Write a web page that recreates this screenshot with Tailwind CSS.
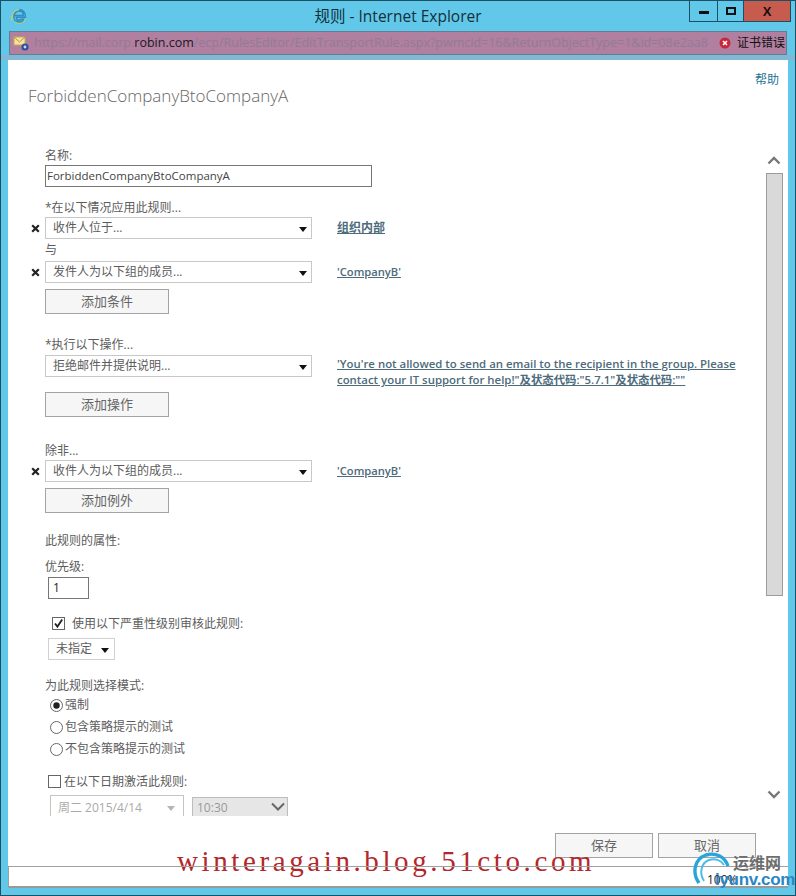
<!DOCTYPE html>
<html lang="zh">
<head>
    <meta charset="UTF-8">
    <title>规则 - Internet Explorer</title>
    <script src="https://cdn.jsdelivr.net/npm/@tailwindcss/browser@4"></script>
</head>
<body class="m-0 bg-[#62c8e9]">
<div class="relative w-[796px] h-[896px] overflow-hidden flex flex-col bg-[#62c8e9] border border-[#1d4f63] font-['Open_Sans','Noto_Sans_CJK_SC',sans-serif] text-[12px] text-[#5c5c5c]">

    <!-- title bar -->
    <div class="h-[30px] shrink-0 flex relative">
        <svg class="absolute left-[9px] top-[6px]" width="18" height="18" viewBox="0 0 18 18">
            <path d="M2 13.5C1 9 3.5 4 9 2.5" fill="none" stroke="#d8c95a" stroke-width="1.4"/>
            <path d="M5 15.5C9 17 13 15.5 15.5 12" fill="none" stroke="#c9c65a" stroke-width="1.3"/>
            <path d="M4.5 8.5H13.5C13.5 5.5 11.5 4 9.2 4C6.2 4 3.8 6.5 3.8 9.6C3.8 12.7 6.2 15 9.2 15C11.4 15 12.9 14 13.6 12.3H11C10.5 13 9.9 13.3 9.1 13.3C7.4 13.3 6.4 12 6.3 10.3H15.5C15.8 6.5 13.8 2.8 9.3 2.5" fill="none" stroke="#2f8fc4" stroke-width="1.5"/>
        </svg>
        <div class="flex-1 text-center text-[15.5px] leading-[30px] text-[#12303c]">规则 - Internet Explorer</div>
        <div class="absolute right-[4px] top-0 flex h-[21px] border border-t-0 border-[#1d4f63]">
            <div class="w-[28px] flex items-center justify-center border-r border-[#1d4f63]"><div class="w-[10px] h-[3px] mt-[3px] bg-[#111]"></div></div>
            <div class="w-[26px] flex items-center justify-center border-r border-[#1d4f63]"><div class="w-[10px] h-[8px] border-2 border-[#111]"></div></div>
            <div class="w-[46px] bg-[#c75b4d] flex items-center justify-center text-[13px] font-bold text-[#111] leading-none font-['Liberation_Sans',sans-serif]">X</div>
        </div>
    </div>

    <!-- address bar -->
    <div class="mx-[8px] w-[778px] h-[24px] shrink-0 flex items-center bg-[#b17f9f] border border-[#5f7f95]">
        <svg class="ml-[3px] shrink-0" width="17" height="17" viewBox="0 0 17 17">
            <rect x="1" y="2" width="11" height="8" fill="#f3e2a0" stroke="#c9a94e"/>
            <path d="M1 2L6.5 7L12 2" fill="none" stroke="#b8923c"/>
            <circle cx="12" cy="12" r="3.6" fill="#2c4f9e"/>
            <circle cx="12" cy="12" r="1.4" fill="#cdd8f0"/>
        </svg>
        <div class="ml-[4px] w-[675px] overflow-hidden whitespace-nowrap text-[12.5px] text-[#907c98] leading-[22px]">https://mail.corp.<span class="text-[#1a1a22]">robin.com</span>/ecp/RulesEditor/EditTransportRule.aspx?pwmcid=16&amp;ReturnObjectType=1&amp;id=08e2aa8</div>
        <svg class="ml-[10px] shrink-0" width="12" height="12" viewBox="0 0 12 12">
            <circle cx="6" cy="6" r="5.5" fill="#c9283a"/>
            <path d="M4 4L8 8M8 4L4 8" stroke="#fff" stroke-width="1.6"/>
        </svg>
        <div class="ml-[6px] text-[12px] text-[#111] whitespace-nowrap">证书错误</div>
    </div>
    <div class="h-[5px] shrink-0 bg-[#82b8d4]"></div>

    <!-- dialog body -->
    <div class="mx-[7px] w-[780px] h-[828px] shrink-0 bg-white border-b-2 border-[#9a9a9a] flex flex-col">
        <div class="h-[72px] shrink-0 relative">
            <div class="absolute right-[9px] top-[11px] text-[#1b7596]">帮助</div>
            <div class="pl-[20px] pt-[23px] text-[17px] leading-[26px] font-light text-[#666]">ForbiddenCompanyBtoCompanyA</div>
        </div>

        <div class="h-[684px] shrink-0 flex">
            <!-- scrolling form -->
            <div class="w-[750px] overflow-hidden pl-[37px] pt-[14px]">
                <div class="h-[19px] leading-[19px]">名称:</div>
                <div class="w-[327px] h-[22px] border border-[#767676] pl-[1px] leading-[20px] text-[11.5px] text-[#444]">ForbiddenCompanyBtoCompanyA</div>

                <div class="mt-[11px] h-[19px] leading-[19px]">*在以下情况应用此规则...</div>
                <div class="relative w-[267px] h-[22px] border border-[#c8c8c8] flex items-center pl-[7px] justify-between pr-[4px]">
                    <svg class="absolute left-[-15px] top-[6px]" width="9" height="9" viewBox="0 0 9 9"><path d="M1.2 1.2L7.8 7.8M7.8 1.2L1.2 7.8" stroke="#222" stroke-width="2.2"/></svg>
                    <span>收件人位于...</span>
                    <svg width="8" height="5" viewBox="0 0 8 5" class="mt-[2px]"><path d="M0 0H8L4 5Z" fill="#111"/></svg>
                    <a class="absolute left-[291px] top-[0px] whitespace-nowrap underline font-semibold text-[12px] text-[#4d6b7b] leading-[19px]">组织内部</a>
                </div>
                <div class="h-[22px] leading-[22px]">与</div>
                <div class="relative w-[267px] h-[22px] border border-[#c8c8c8] flex items-center pl-[7px] justify-between pr-[4px]">
                    <svg class="absolute left-[-15px] top-[6px]" width="9" height="9" viewBox="0 0 9 9"><path d="M1.2 1.2L7.8 7.8M7.8 1.2L1.2 7.8" stroke="#222" stroke-width="2.2"/></svg>
                    <span>发件人为以下组的成员...</span>
                    <svg width="8" height="5" viewBox="0 0 8 5" class="mt-[2px]"><path d="M0 0H8L4 5Z" fill="#111"/></svg>
                    <a class="absolute left-[291px] top-[0px] whitespace-nowrap underline font-semibold text-[11.2px] text-[#4d6b7b] leading-[19px]">'CompanyB'</a>
                </div>
                <div class="mt-[6px] w-[124px] h-[25px] border border-[#a3a3a3] bg-[#f6f6f6] text-center leading-[23px] text-[13px] text-[#666]">添加条件</div>

                <div class="mt-[21px] h-[20px] leading-[19px]">*执行以下操作...</div>
                <div class="relative w-[267px] h-[22px] border border-[#c8c8c8] flex items-center pl-[7px] justify-between pr-[4px]">
                    <span>拒绝邮件并提供说明...</span>
                    <svg width="8" height="5" viewBox="0 0 8 5" class="mt-[2px]"><path d="M0 0H8L4 5Z" fill="#111"/></svg>
                    <a class="absolute left-[291px] top-[0px] w-[406px] underline font-semibold text-[11.4px] text-[#4d6b7b] leading-[16px]">'You're not allowed to send an email to the recipient in the group. Please contact your IT support for help!"及状态代码:"5.7.1"及状态代码:""</a>
                </div>
                <div class="mt-[15px] w-[124px] h-[25px] border border-[#a3a3a3] bg-[#f6f6f6] text-center leading-[23px] text-[13px] text-[#666]">添加操作</div>

                <div class="mt-[24px] h-[19px] leading-[19px]">除非...</div>
                <div class="relative w-[267px] h-[22px] border border-[#c8c8c8] flex items-center pl-[7px] justify-between pr-[4px]">
                    <svg class="absolute left-[-15px] top-[6px]" width="9" height="9" viewBox="0 0 9 9"><path d="M1.2 1.2L7.8 7.8M7.8 1.2L1.2 7.8" stroke="#222" stroke-width="2.2"/></svg>
                    <span>收件人为以下组的成员...</span>
                    <svg width="8" height="5" viewBox="0 0 8 5" class="mt-[2px]"><path d="M0 0H8L4 5Z" fill="#111"/></svg>
                    <a class="absolute left-[291px] top-[0px] whitespace-nowrap underline font-semibold text-[11.2px] text-[#4d6b7b] leading-[19px]">'CompanyB'</a>
                </div>
                <div class="mt-[6px] w-[124px] h-[25px] border border-[#a3a3a3] bg-[#f6f6f6] text-center leading-[23px] text-[13px] text-[#666]">添加例外</div>

                <div class="mt-[18px] h-[19px] leading-[19px]">此规则的属性:</div>
                <div class="mt-[7px] h-[19px] leading-[19px]">优先级:</div>
                <div class="mt-[1px] ml-[3px] w-[41px] h-[22px] border border-[#767676] pl-[4px] leading-[20px] text-[#222]">1</div>

                <div class="mt-[18px] ml-[7px] h-[13px] flex items-center">
                    <svg width="13" height="13" viewBox="0 0 13 13" class="shrink-0"><rect x="0.5" y="0.5" width="12" height="12" fill="#fff" stroke="#666"/><path d="M3 6.5L5.4 9.6L10.2 2.6" fill="none" stroke="#222" stroke-width="1.8"/></svg>
                    <span class="ml-[7px] whitespace-nowrap">使用以下严重性级别审核此规则:</span>
                </div>
                <div class="mt-[8px] ml-[3px] w-[67px] h-[22px] border border-[#d0d0d0] flex items-center pl-[7px]">
                    <span>未指定</span>
                    <svg width="8" height="5" viewBox="0 0 8 5" class="ml-[9px] mt-[2px]"><path d="M0 0H8L4 5Z" fill="#111"/></svg>
                </div>

                <div class="mt-[16px] h-[18px] leading-[19px]">为此规则选择模式:</div>
                <div class="ml-[5px] flex flex-col">
                    <div class="h-[22px] flex items-center">
                        <svg width="13" height="13" viewBox="0 0 13 13"><circle cx="6.5" cy="6.5" r="6" fill="#fff" stroke="#666"/><circle cx="6.5" cy="6.5" r="3.2" fill="#222"/></svg>
                        <span class="ml-[2px]">强制</span>
                    </div>
                    <div class="h-[22px] flex items-center">
                        <svg width="13" height="13" viewBox="0 0 13 13"><circle cx="6.5" cy="6.5" r="6" fill="#fff" stroke="#666"/></svg>
                        <span class="ml-[2px]">包含策略提示的测试</span>
                    </div>
                    <div class="h-[22px] flex items-center">
                        <svg width="13" height="13" viewBox="0 0 13 13"><circle cx="6.5" cy="6.5" r="6" fill="#fff" stroke="#666"/></svg>
                        <span class="ml-[2px]">不包含策略提示的测试</span>
                    </div>
                </div>

                <div class="mt-[15px] ml-[3px] h-[13px] flex items-center">
                    <svg width="13" height="13" viewBox="0 0 13 13" class="shrink-0"><rect x="0.5" y="0.5" width="12" height="12" fill="#fff" stroke="#666"/></svg>
                    <span class="ml-[3px] whitespace-nowrap">在以下日期激活此规则:</span>
                </div>
                <div class="mt-[7px] ml-[5px] flex items-start gap-[8px]">
                    <div class="w-[134px] h-[30px] border border-[#c4c4c4] flex justify-between pl-[7px] pr-[8px] pt-[3px] text-[#aaa]">
                        <span>周二 2015/4/14</span>
                        <svg width="8" height="5" viewBox="0 0 8 5" class="mt-[7px]"><path d="M0 0H8L4 5Z" fill="#b5b5b5"/></svg>
                    </div>
                    <div class="mt-[2px] w-[96px] h-[28px] border border-[#bdbdbd] bg-[#e6e6e6] flex justify-between pl-[4px] pr-[1px] pt-[1px] text-[#999]">
                        <span>10:30</span>
                        <svg width="16" height="10" viewBox="0 0 16 10" class="mt-[3px]"><path d="M2 1.5L8 7.5L14 1.5" fill="none" stroke="#666" stroke-width="2"/></svg>
                    </div>
                </div>
            </div>

            <!-- scrollbar -->
            <div class="w-[30px] relative">
                <svg class="absolute left-[9px] top-[24px]" width="14" height="9" viewBox="0 0 14 9"><path d="M1.5 7.5L7 2L12.5 7.5" fill="none" stroke="#777" stroke-width="2.4"/></svg>
                <div class="absolute left-[8px] top-[41px] w-[17px] h-[423px] bg-[#d9d9d9] border border-[#9c9c9c]"></div>
                <svg class="absolute left-[9px] top-[658px]" width="14" height="9" viewBox="0 0 14 9"><path d="M1.5 1.5L7 7L12.5 1.5" fill="none" stroke="#777" stroke-width="2.4"/></svg>
            </div>
        </div>

        <!-- dialog buttons -->
        <div class="h-[50px] shrink-0 flex justify-end gap-[5px] pr-[32px] pt-[17px]">
            <div class="w-[98px] h-[25px] border border-[#a3a3a3] bg-[#f6f6f6] text-center leading-[23px] text-[13px] text-[#666]">保存</div>
            <div class="w-[98px] h-[25px] border border-[#a3a3a3] bg-[#f6f6f6] text-center leading-[23px] text-[13px] text-[#666]">取消</div>
        </div>
    </div>

    <!-- blog watermark -->
    <div class="absolute left-[176px] top-[843px] text-[29px] leading-[34px] tracking-[3.6px] whitespace-nowrap text-[#b3272b] font-['Liberation_Serif',serif]">winteragain.blog.51cto.com</div>

    <!-- status bar line and zoom -->
    <div class="absolute left-[7px] top-[865px] w-[780px] h-px bg-[#a0a0a0]"></div>
    <div class="absolute left-[7px] top-[865px] w-px h-[22px] bg-[#a0a0a0]"></div>
    <div class="absolute left-[706px] top-[870px] text-[12px] text-[#222]">100%</div>

    <!-- site logo -->
    <svg class="absolute left-[690px] top-[850px]" width="42" height="36" viewBox="0 0 42 36">
        <path d="M8 32C1 22 3 8 15 4C25 1 34 6 37 15" fill="none" stroke="#27a5dc" stroke-width="3.4"/>
        <path d="M13 30C8 22 10 12 18 9C24 7 30 9 33 14" fill="none" stroke="#4cbce8" stroke-width="2"/>
    </svg>
    <div class="absolute left-[732px] top-[852px] text-[16px] leading-[20px] font-semibold text-[#6e6e6e]">运维网</div>
    <div class="absolute left-[714px] top-[869px] text-[17px] leading-[20px] font-bold tracking-[-0.3px] text-[#2a86c4] font-['Liberation_Sans',sans-serif]">iyunv.com</div>
</div>
</body>
</html>
